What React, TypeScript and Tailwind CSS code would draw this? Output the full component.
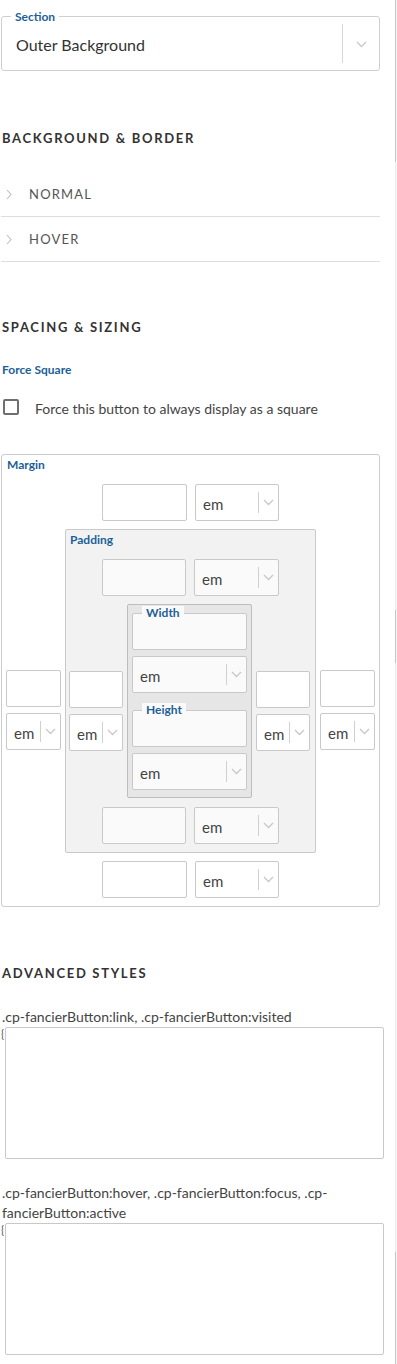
import React from "react";

const blue = "text-[#1d5f98]";

function Chevron({ className = "" }: { className?: string }) {
  return (
    <svg width="11" height="7" viewBox="0 0 11 7" className={className}>
      <polyline points="1,1 5.5,5.5 10,1" fill="none" stroke="#c8c8c8" strokeWidth="1.3" />
    </svg>
  );
}

function Caret() {
  return (
    <svg width="6" height="11" viewBox="0 0 6 11">
      <polyline points="1,1 5,5.5 1,10" fill="none" stroke="#bdbdbd" strokeWidth="1.1" />
    </svg>
  );
}

function TextBox({ w, bg = "bg-white" }: { w: string; bg?: string }) {
  return <div className={`${w} h-[37px] border border-[#c9c9c9] rounded-[2px] ${bg}`} />;
}

function UnitSelect({ w, bg = "bg-white" }: { w: string; bg?: string }) {
  return (
    <div className={`${w} h-[37px] border border-[#c9c9c9] rounded-[2px] ${bg} flex items-center`}>
      <span className="flex-1 pl-[7px] text-[15px] text-[#444] leading-none pt-[3px]">em</span>
      <div className="w-px h-[21px] bg-[#d0d0d0]" />
      <div className="w-[19px] flex justify-center">
        <Chevron />
      </div>
    </div>
  );
}

function SideCol({ mt, w }: { mt: string; w: string }) {
  return (
    <div className={`${w} ${mt} flex flex-col gap-[6px] shrink-0`}>
      <TextBox w="w-full" />
      <UnitSelect w="w-full" />
    </div>
  );
}

function SizeField({ label }: { label: string }) {
  return (
    <div className="relative h-[37px] border border-[#c9c9c9] rounded-[2px] bg-[#fafafa]">
      <span className={`absolute -top-[8px] left-[9px] px-[4px] bg-[#fafafa] text-[12px] font-bold leading-[14px] ${blue}`}>
        {label}
      </span>
    </div>
  );
}

function Heading({ children, mt }: { children: React.ReactNode; mt: string }) {
  return (
    <h2 className={`${mt} pl-[2px] text-[13px] font-bold tracking-[1.7px] leading-[20px] text-[#333]`}>
      {children}
    </h2>
  );
}

function AccordionRow({ label }: { label: string }) {
  return (
    <div className="h-[45px] border-b border-[#dedede] flex items-center">
      <span className="pl-[5px] w-[28px]">
        <Caret />
      </span>
      <span className="text-[13px] tracking-[1.2px] text-[#555] pt-[1px]">{label}</span>
    </div>
  );
}

function CodeArea({ label }: { label: string }) {
  return (
    <div>
      <p className="pl-[2px] pr-[10px] text-[14px] leading-[20px] text-[#444]">{label}</p>
      <div className="flex items-start">
        <span className="w-[3px] ml-[1px] overflow-hidden text-[11px] leading-[14px] text-[#555]">{"{"}</span>
        <textarea className="ml-[1px] w-[379px] h-[132px] border border-[#c9c9c9] rounded-[2px] bg-white resize-none outline-none" />
      </div>
    </div>
  );
}

export default function App() {
  return (
    <div className="min-h-[1364px] flex bg-white" style={{ fontFamily: "Lato, 'Noto Sans', sans-serif" }}>
      <div className="w-[395px] shrink-0 pb-[10px]">
        {/* Section select */}
        <div className="ml-[1px] mt-[16px] w-[379px] h-[55px] relative border border-[#cfcfcf] rounded-[3px] flex items-center">
          <span className={`absolute -top-[7px] left-[9px] px-[4px] bg-white text-[12px] font-bold leading-[14px] ${blue}`}>
            Section
          </span>
          <span className="flex-1 pl-[14px] text-[16px] text-[#333] pt-[2px]">Outer Background</span>
          <div className="w-px h-[39px] bg-[#d6d6d6]" />
          <div className="w-[36px] flex justify-center pt-[2px]">
            <Chevron />
          </div>
        </div>

        <Heading mt="mt-[57px]">BACKGROUND &amp; BORDER</Heading>

        <div className="mt-[24px] ml-[1px] w-[379px]">
          <AccordionRow label="NORMAL" />
          <AccordionRow label="HOVER" />
        </div>

        <Heading mt="mt-[55px]">SPACING &amp; SIZING</Heading>

        <p className={`mt-[26px] pl-[2px] text-[12px] font-bold leading-[14px] ${blue}`}>Force Square</p>

        <label className="mt-[20px] flex items-center h-[20px]">
          <span className="ml-[3px] w-[16px] h-[16px] border-2 border-[#6f6f6f] rounded-[2px] shrink-0" />
          <span className="ml-[16px] text-[14px] text-[#444] pt-[2px]">Force this button to always display as a square</span>
        </label>

        {/* Margin box */}
        <div className="mt-[37px] ml-[1px] w-[379px] border border-[#cccccc] rounded-[3px] pb-[8px]">
          <p className={`pt-[3px] pl-[5px] text-[12px] font-bold leading-[14px] ${blue}`}>Margin</p>
          <div className="mt-[12px] flex justify-center gap-[8px]">
            <TextBox w="w-[85px]" />
            <UnitSelect w="w-[84px]" />
          </div>

          <div className="mt-[8px] px-[4px] flex items-start gap-[4px]">
            <SideCol mt="mt-[141px]" w="w-[55px]" />

            {/* Padding box */}
            <div className="w-[251px] shrink-0 bg-[#f2f2f2] border border-[#c9c9c9] rounded-[2px] pb-[8px]">
              <p className={`pt-[3px] pl-[4px] text-[12px] font-bold leading-[14px] ${blue}`}>Padding</p>
              <div className="mt-[12px] flex justify-center gap-[8px]">
                <TextBox w="w-[84px]" bg="bg-[#fafafa]" />
                <UnitSelect w="w-[85px]" bg="bg-[#fafafa]" />
              </div>

              <div className="mt-[8px] px-[3px] flex items-start gap-[4px]">
                <SideCol mt="mt-[67px]" w="w-[54px]" />

                {/* Size box */}
                <div className="w-[125px] shrink-0 bg-[#e6e6e6] border border-[#bdbdbd] rounded-[2px] px-[4px] pt-[8px] pb-[7px]">
                  <SizeField label="Width" />
                  <div className="mt-[6px]">
                    <UnitSelect w="w-full" bg="bg-[#fafafa]" />
                  </div>
                  <div className="mt-[17px]">
                    <SizeField label="Height" />
                  </div>
                  <div className="mt-[6px]">
                    <UnitSelect w="w-full" bg="bg-[#fafafa]" />
                  </div>
                </div>

                <SideCol mt="mt-[67px]" w="w-[54px]" />
              </div>

              <div className="mt-[9px] flex justify-center gap-[8px]">
                <TextBox w="w-[84px]" bg="bg-[#fafafa]" />
                <UnitSelect w="w-[85px]" bg="bg-[#fafafa]" />
              </div>
            </div>

            <SideCol mt="mt-[141px]" w="w-[55px]" />
          </div>

          <div className="mt-[8px] flex justify-center gap-[8px]">
            <TextBox w="w-[85px]" />
            <UnitSelect w="w-[84px]" />
          </div>
        </div>

        <Heading mt="mt-[56px]">ADVANCED STYLES</Heading>

        <div className="mt-[24px]">
          <CodeArea label=".cp-fancierButton:link, .cp-fancierButton:visited" />
        </div>
        <div className="mt-[24px]">
          <CodeArea label=".cp-fancierButton:hover, .cp-fancierButton:focus, .cp-fancierButton:active" />
        </div>
      </div>

      {/* neighbouring panel edge */}
      <div className="w-[2px] flex flex-col bg-[#f6f6f6]">
        <div className="h-[162px] border-l border-[#c6c6c6]" />
        <div className="h-[448px] border-l border-[#ededed]" />
        <div className="h-[53px] border-l border-[#c6c6c6]" />
        <div className="h-[589px] border-l border-[#ededed]" />
        <div className="flex-1 border-l border-[#c6c6c6]" />
      </div>
    </div>
  );
}
